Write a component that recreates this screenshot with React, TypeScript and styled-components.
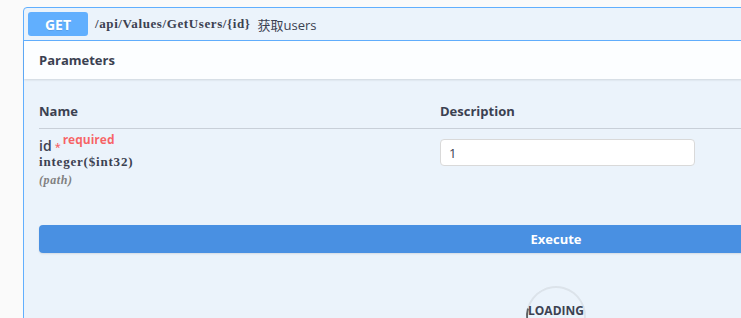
import styled, { createGlobalStyle, keyframes } from "styled-components";

const GlobalStyle = createGlobalStyle`
  html, body {
    margin: 0;
    padding: 0;
    background: #fafafa;
    overflow: hidden;
  }
  body {
    font-family: "Open Sans", "Noto Sans CJK SC", sans-serif;
    color: #3b4151;
  }
`;

const Page = styled.div`
  padding: 7px 0 0 23px;
  width: 1200px;
`;

const OpBlock = styled.div`
  width: 1064px;
  border: 1px solid #61affe;
  border-radius: 4px;
  background: #ebf3fb;
  height: 400px;
`;

const Summary = styled.div`
  display: flex;
  align-items: center;
  height: 32px;
  padding: 0 4px;
  border-bottom: 1px solid #61affe;
`;

const Method = styled.span`
  width: 60px;
  height: 24px;
  display: flex;
  align-items: center;
  justify-content: center;
  background: #61affe;
  color: #fff;
  font-size: 14px;
  font-weight: 700;
  border-radius: 3px;
  text-shadow: 0 1px 0 rgba(0, 0, 0, 0.1);
`;

const Path = styled.span`
  margin-left: 7px;
  font-family: "Liberation Serif", serif;
  font-weight: 700;
  font-size: 13px;
  letter-spacing: 0.6px;
  color: #3b4151;
`;

const Desc = styled.span`
  margin-left: 7px;
  font-size: 13px;
  color: #3b4151;
`;

const SectionHeader = styled.div`
  height: 38px;
  display: flex;
  align-items: center;
  padding: 0 15px;
  background: rgba(255, 255, 255, 0.85);
  box-shadow: 0 1px 2px rgba(0, 0, 0, 0.12);
`;

const SectionTitle = styled.h4`
  margin: 0;
  font-size: 13px;
  font-weight: 700;
`;

const Body = styled.div`
  padding: 0 15px;
`;

const Table = styled.div`
  display: grid;
  grid-template-columns: 401px 1fr;
  margin-top: 23px;
`;

const HeadCell = styled.div`
  font-size: 13px;
  font-weight: 700;
  padding-bottom: 8px;
  border-bottom: 1px solid rgba(59, 65, 81, 0.2);
`;

const Cell = styled.div`
  padding-top: 9px;
`;

const ParamName = styled.div`
  font-size: 14px;
  font-weight: 600;
  line-height: 16px;
`;

const Star = styled.span`
  color: rgba(255, 0, 0, 0.6);
  font-size: 11px;
  margin-left: 3px;
`;

const Required = styled.span`
  color: rgba(255, 0, 0, 0.6);
  font-size: 12px;
  font-weight: 700;
  position: relative;
  top: -7px;
  margin-left: 2px;
`;

const ParamType = styled.div`
  font-family: "Liberation Serif", serif;
  font-weight: 700;
  font-size: 13px;
  letter-spacing: 0.8px;
  line-height: 18px;
  margin-top: -2px;
`;

const ParamIn = styled.div`
  font-family: "Liberation Serif", serif;
  font-style: italic;
  font-weight: 700;
  font-size: 12px;
  letter-spacing: 0.6px;
  line-height: 18px;
  color: #808080;
`;

const Input = styled.input`
  box-sizing: border-box;
  width: 255px;
  height: 27px;
  margin-top: 1px;
  padding: 0 8px;
  border: 1px solid #d9d9d9;
  border-radius: 4px;
  background: #fff;
  font-family: "Open Sans", sans-serif;
  font-size: 13px;
  color: #3b4151;
  outline: none;
`;

const ExecuteButton = styled.button`
  display: block;
  width: 100%;
  height: 28px;
  margin-top: 36px;
  border: none;
  border-radius: 4px;
  background: #4990e2;
  color: #fff;
  font-family: "Open Sans", sans-serif;
  font-size: 13px;
  font-weight: 700;
  box-shadow: 0 1px 2px rgba(0, 0, 0, 0.1);
`;

const spin = keyframes`
  from { transform: rotate(0deg); }
  to { transform: rotate(360deg); }
`;

const LoadingWrap = styled.div`
  display: flex;
  justify-content: center;
  margin-top: 33px;
`;

const Loading = styled.div`
  position: relative;
  width: 60px;
  height: 60px;
  display: flex;
  align-items: center;
  justify-content: center;
  padding-bottom: 11px;
  box-sizing: border-box;
  font-size: 12px;
  font-weight: 700;
  text-transform: uppercase;
  color: #3b4151;

  &::before {
    content: "";
    position: absolute;
    inset: 0;
    border-radius: 50%;
    border: 2px solid rgba(85, 85, 85, 0.1);
    border-left-color: rgba(0, 0, 0, 0.6);
    transform: rotate(-30deg);
    animation: ${spin} 100000s linear infinite;
  }
`;

export default function App() {
  return (
    <>
      <GlobalStyle />
      <Page>
        <OpBlock>
          <Summary>
            <Method>GET</Method>
            <Path>/api/Values/GetUsers/&#123;id&#125;</Path>
            <Desc>获取users</Desc>
          </Summary>
          <SectionHeader>
            <SectionTitle>Parameters</SectionTitle>
          </SectionHeader>
          <Body>
            <Table>
              <HeadCell>Name</HeadCell>
              <HeadCell>Description</HeadCell>
              <Cell>
                <ParamName>
                  id<Star>*</Star>
                  <Required>required</Required>
                </ParamName>
                <ParamType>integer($int32)</ParamType>
                <ParamIn>(path)</ParamIn>
              </Cell>
              <Cell>
                <Input defaultValue="1" />
              </Cell>
            </Table>
            <ExecuteButton>Execute</ExecuteButton>
            <LoadingWrap>
              <Loading>loading</Loading>
            </LoadingWrap>
          </Body>
        </OpBlock>
      </Page>
    </>
  );
}
